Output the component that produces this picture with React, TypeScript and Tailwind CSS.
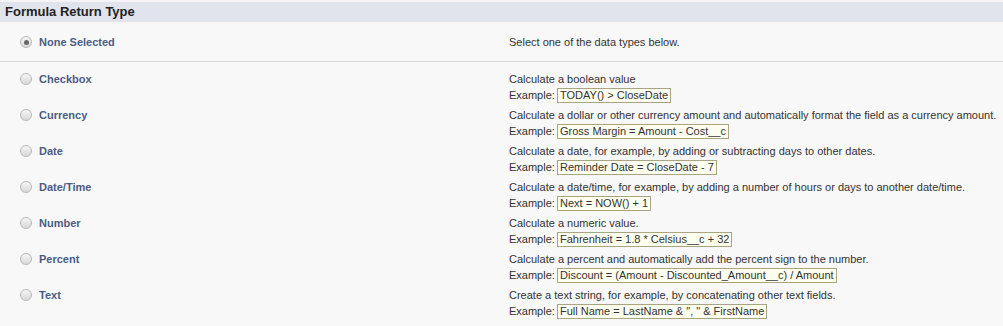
const types = [
  {
    name: "Checkbox",
    desc: "Calculate a boolean value",
    example: "TODAY() > CloseDate",
  },
  {
    name: "Currency",
    desc: "Calculate a dollar or other currency amount and automatically format the field as a currency amount.",
    example: "Gross Margin = Amount - Cost__c",
  },
  {
    name: "Date",
    desc: "Calculate a date, for example, by adding or subtracting days to other dates.",
    example: "Reminder Date = CloseDate - 7",
  },
  {
    name: "Date/Time",
    desc: "Calculate a date/time, for example, by adding a number of hours or days to another date/time.",
    example: "Next = NOW() + 1",
  },
  {
    name: "Number",
    desc: "Calculate a numeric value.",
    example: "Fahrenheit = 1.8 * Celsius__c + 32",
  },
  {
    name: "Percent",
    desc: "Calculate a percent and automatically add the percent sign to the number.",
    example: "Discount = (Amount - Discounted_Amount__c) / Amount",
  },
  {
    name: "Text",
    desc: "Create a text string, for example, by concatenating other text fields.",
    example: 'Full Name = LastName & ", " & FirstName',
  },
];

const Radio = ({ checked }: { checked?: boolean }) => (
  <span className="size-[12px] shrink-0 rounded-full border border-[#b8b8b8] bg-gradient-to-b from-[#f6f6f6] to-[#d8d8d8] flex items-center justify-center">
    {checked && <span className="size-[5px] rounded-full bg-[#666]" />}
  </span>
);

const Label = ({ text, checked }: { text: string; checked?: boolean }) => (
  <div className="flex items-center gap-[7px] pl-[20px] h-[14px]">
    <Radio checked={checked} />
    <span className="font-bold text-[11px] leading-[14px] text-[#4a5d84]">{text}</span>
  </div>
);

export default function App() {
  return (
    <div className="w-[1003px] h-[326px] bg-[#f8f8f8] font-['Liberation_Sans',Arial,sans-serif] overflow-hidden">
      <div className="h-[2px] bg-[#f4f4f6]" />
      <div className="h-[20px] bg-[#e1e4ed] px-[5px] flex items-center">
        <span className="font-bold text-[13px] text-[#222]">Formula Return Type</span>
      </div>

      <div className="grid grid-cols-[509px_1fr] pt-[13px] h-[40px] border-b border-[#d9d9d9]">
        <Label text="None Selected" checked />
        <div className="text-[11px] leading-[14px] text-[#333]">Select one of the data types below.</div>
      </div>

      <div className="pt-[10px]">
        {types.map((t) => (
          <div key={t.name} className="grid grid-cols-[509px_1fr] h-[36px]">
            <Label text={t.name} />
            <div className="text-[11px] text-[#333]">
              <div className="leading-[14px]">{t.desc}</div>
              <div className="flex items-center h-[15px] mt-[2px]">
                <span className="w-[48px]">Example:</span>
                <span className="border border-[#aaa482] bg-[#fffff0] px-[2px] leading-[13px]">
                  {t.example}
                </span>
              </div>
            </div>
          </div>
        ))}
      </div>
    </div>
  );
}
